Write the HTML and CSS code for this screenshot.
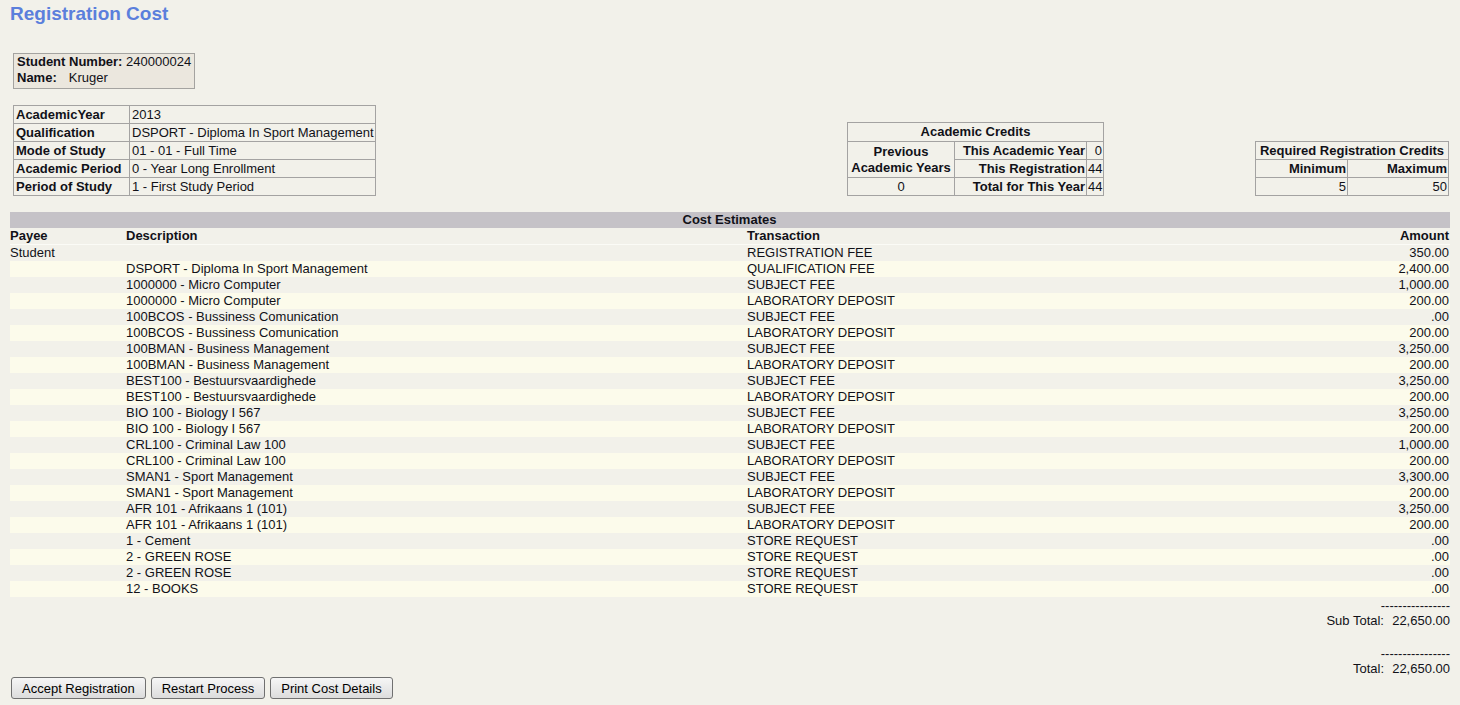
FILE: index.html
```html
<!DOCTYPE html>
<html lang="en">
<head>
<meta charset="utf-8">
<title>Registration Cost</title>
<link rel="stylesheet" href="styles.css">
</head>
<body>
<h1 class="title">Registration Cost</h1>

<table class="student">
  <tr><td><b>Student Number:</b> 240000024</td></tr>
  <tr><td><b>Name:</b><span class="student-name">Kruger</span></td></tr>
</table>

<div class="info-row">
  <table class="grid info">
    <colgroup><col class="info-label"><col class="info-value"></colgroup>
    <tr><th>AcademicYear</th><td>2013</td></tr>
    <tr><th>Qualification</th><td>DSPORT - Diploma In Sport Management</td></tr>
    <tr><th>Mode of Study</th><td>01 - 01 - Full Time</td></tr>
    <tr><th>Academic Period</th><td>0 - Year Long Enrollment</td></tr>
    <tr><th>Period of Study</th><td>1 - First Study Period</td></tr>
  </table>

  <table class="grid credits">
    <colgroup><col class="cr-1"><col class="cr-2"><col class="cr-3"></colgroup>
    <tr><th colspan="3" class="center">Academic Credits</th></tr>
    <tr><th rowspan="2" class="center">Previous<br>Academic Years</th><th class="right">This Academic Year</th><td class="right">0</td></tr>
    <tr><th class="right">This Registration</th><td class="right">44</td></tr>
    <tr><td class="center">0</td><th class="right">Total for This Year</th><td class="right">44</td></tr>
  </table>

  <table class="grid required">
    <colgroup><col class="rq-1"><col class="rq-2"></colgroup>
    <tr><th colspan="2" class="center">Required Registration Credits</th></tr>
    <tr><th class="right">Minimum</th><th class="right">Maximum</th></tr>
    <tr><td class="right">5</td><td class="right">50</td></tr>
  </table>
</div>

<table class="cost">
  <colgroup><col class="c-payee"><col class="c-desc"><col class="c-trans"><col class="c-amt"></colgroup>
  <thead>
    <tr class="bar"><th colspan="4">Cost Estimates</th></tr>
    <tr class="heads"><th>Payee</th><th>Description</th><th>Transaction</th><th class="right">Amount</th></tr>
  </thead>
  <tbody>
    <tr><td>Student</td><td></td><td>REGISTRATION FEE</td><td class="right">350.00</td></tr>
    <tr><td></td><td>DSPORT - Diploma In Sport Management</td><td>QUALIFICATION FEE</td><td class="right">2,400.00</td></tr>
    <tr><td></td><td>1000000 - Micro Computer</td><td>SUBJECT FEE</td><td class="right">1,000.00</td></tr>
    <tr><td></td><td>1000000 - Micro Computer</td><td>LABORATORY DEPOSIT</td><td class="right">200.00</td></tr>
    <tr><td></td><td>100BCOS - Bussiness Comunication</td><td>SUBJECT FEE</td><td class="right">.00</td></tr>
    <tr><td></td><td>100BCOS - Bussiness Comunication</td><td>LABORATORY DEPOSIT</td><td class="right">200.00</td></tr>
    <tr><td></td><td>100BMAN - Business Management</td><td>SUBJECT FEE</td><td class="right">3,250.00</td></tr>
    <tr><td></td><td>100BMAN - Business Management</td><td>LABORATORY DEPOSIT</td><td class="right">200.00</td></tr>
    <tr><td></td><td>BEST100 - Bestuursvaardighede</td><td>SUBJECT FEE</td><td class="right">3,250.00</td></tr>
    <tr><td></td><td>BEST100 - Bestuursvaardighede</td><td>LABORATORY DEPOSIT</td><td class="right">200.00</td></tr>
    <tr><td></td><td>BIO 100 - Biology I 567</td><td>SUBJECT FEE</td><td class="right">3,250.00</td></tr>
    <tr><td></td><td>BIO 100 - Biology I 567</td><td>LABORATORY DEPOSIT</td><td class="right">200.00</td></tr>
    <tr><td></td><td>CRL100 - Criminal Law 100</td><td>SUBJECT FEE</td><td class="right">1,000.00</td></tr>
    <tr><td></td><td>CRL100 - Criminal Law 100</td><td>LABORATORY DEPOSIT</td><td class="right">200.00</td></tr>
    <tr><td></td><td>SMAN1 - Sport Management</td><td>SUBJECT FEE</td><td class="right">3,300.00</td></tr>
    <tr><td></td><td>SMAN1 - Sport Management</td><td>LABORATORY DEPOSIT</td><td class="right">200.00</td></tr>
    <tr><td></td><td>AFR 101 - Afrikaans 1 (101)</td><td>SUBJECT FEE</td><td class="right">3,250.00</td></tr>
    <tr><td></td><td>AFR 101 - Afrikaans 1 (101)</td><td>LABORATORY DEPOSIT</td><td class="right">200.00</td></tr>
    <tr><td></td><td>1 - Cement</td><td>STORE REQUEST</td><td class="right">.00</td></tr>
    <tr><td></td><td>2 - GREEN ROSE</td><td>STORE REQUEST</td><td class="right">.00</td></tr>
    <tr><td></td><td>2 - GREEN ROSE</td><td>STORE REQUEST</td><td class="right">.00</td></tr>
    <tr><td></td><td>12 - BOOKS</td><td>STORE REQUEST</td><td class="right">.00</td></tr>
  </tbody>
</table>

<div class="totals">
  <div class="total-line total-dash"><span>----------------</span></div>
  <div class="total-line"><span class="total-label">Sub Total:</span><span class="total-value">22,650.00</span></div>
  <div class="total-line"></div>
  <div class="total-line total-dash"><span>----------------</span></div>
  <div class="total-line"><span class="total-label">Total:</span><span class="total-value">22,650.00</span></div>
</div>

<div class="actions">
  <button type="button" class="btn">Accept Registration</button>
  <button type="button" class="btn">Restart Process</button>
  <button type="button" class="btn">Print Cost Details</button>
</div>
</body>
</html>
```

FILE: styles.css
```css
html, body {
  margin: 0;
  padding: 0;
}

body {
  background: #f2f1ea;
  color: #111118;
  font-family: "Liberation Sans", Arial, sans-serif;
  font-size: 13px;
  line-height: 16px;
  padding: 0 10px;
}

.title {
  margin: 3px 0 0;
  font-size: 19px;
  line-height: 22px;
  font-weight: bold;
  color: #5b7fdc;
}

table {
  font-size: 13px;
  line-height: 16px;
  color: inherit;
}

th {
  font-weight: bold;
  text-align: left;
}

.center { text-align: center; }
.right { text-align: right; }

.student {
  margin: 28px 0 0 3px;
  border: 1px solid #a4a3a0;
  border-spacing: 0;
  background: #ebe7de;
  padding: 0 2px 2px 2px;
}

.student td {
  padding: 0 1px;
  height: 16px;
}

.student-name {
  margin-left: 12px;
}

.info-row {
  display: flex;
  align-items: flex-end;
  margin-top: 16px;
}

.grid {
  border-collapse: collapse;
  table-layout: fixed;
}

.grid th,
.grid td {
  border: 1px solid #a4a3a2;
  padding: 0 2px;
  height: 17px;
  white-space: nowrap;
  vertical-align: middle;
}

.info {
  margin-left: 3px;
  width: 362px;
}

.info-label { width: 116px; }
.info-value { width: 246px; }

.credits {
  margin-left: 471px;
  width: 256px;
}

.credits th,
.credits td { padding: 0 1px; }

.credits tr:first-child th { height: 18px; }

.cr-1 { width: 107px; }
.cr-2 { width: 132px; }
.cr-3 { width: 17px; }

.required {
  margin-left: auto;
  margin-right: 1px;
  width: 193px;
}

.required th,
.required td { padding: 0 1px; }

.rq-1 { width: 92px; }
.rq-2 { width: 101px; }

.cost {
  margin-top: 16px;
  width: 100%;
  border-collapse: collapse;
  table-layout: fixed;
}

.c-payee { width: 116px; }
.c-desc { width: 621px; }
.c-trans { width: 420px; }

.cost th,
.cost td {
  padding: 0 1px 0 0;
  height: 16px;
  white-space: nowrap;
}

.cost .bar th {
  background: #c5c2c7;
  text-align: center;
}

.cost .heads th {
  height: 17px;
  vertical-align: top;
  box-shadow: inset 0 -1px 0 #fbfbf6;
}

.cost tbody tr:nth-child(even) {
  background: #fcfbeb;
}

.totals {
  text-align: right;
}

.total-line {
  display: flex;
  justify-content: flex-end;
  height: 16px;
  line-height: 16px;
}

.total-dash span {
  position: relative;
  top: 1px;
}

.total-label {
  margin-right: 6px;
}

.total-value {
  display: inline-block;
  width: 60px;
  text-align: right;
}

.actions {
  margin-top: 0;
  display: flex;
  gap: 5px;
  padding-left: 1px;
}

.btn {
  height: 22px;
  padding: 0 10px;
  font-family: "Liberation Sans", Arial, sans-serif;
  font-size: 13px;
  color: #000;
  background: linear-gradient(#f6f6f6, #dcdcdc);
  border: 1px solid #707070;
  border-radius: 3px;
}
```
